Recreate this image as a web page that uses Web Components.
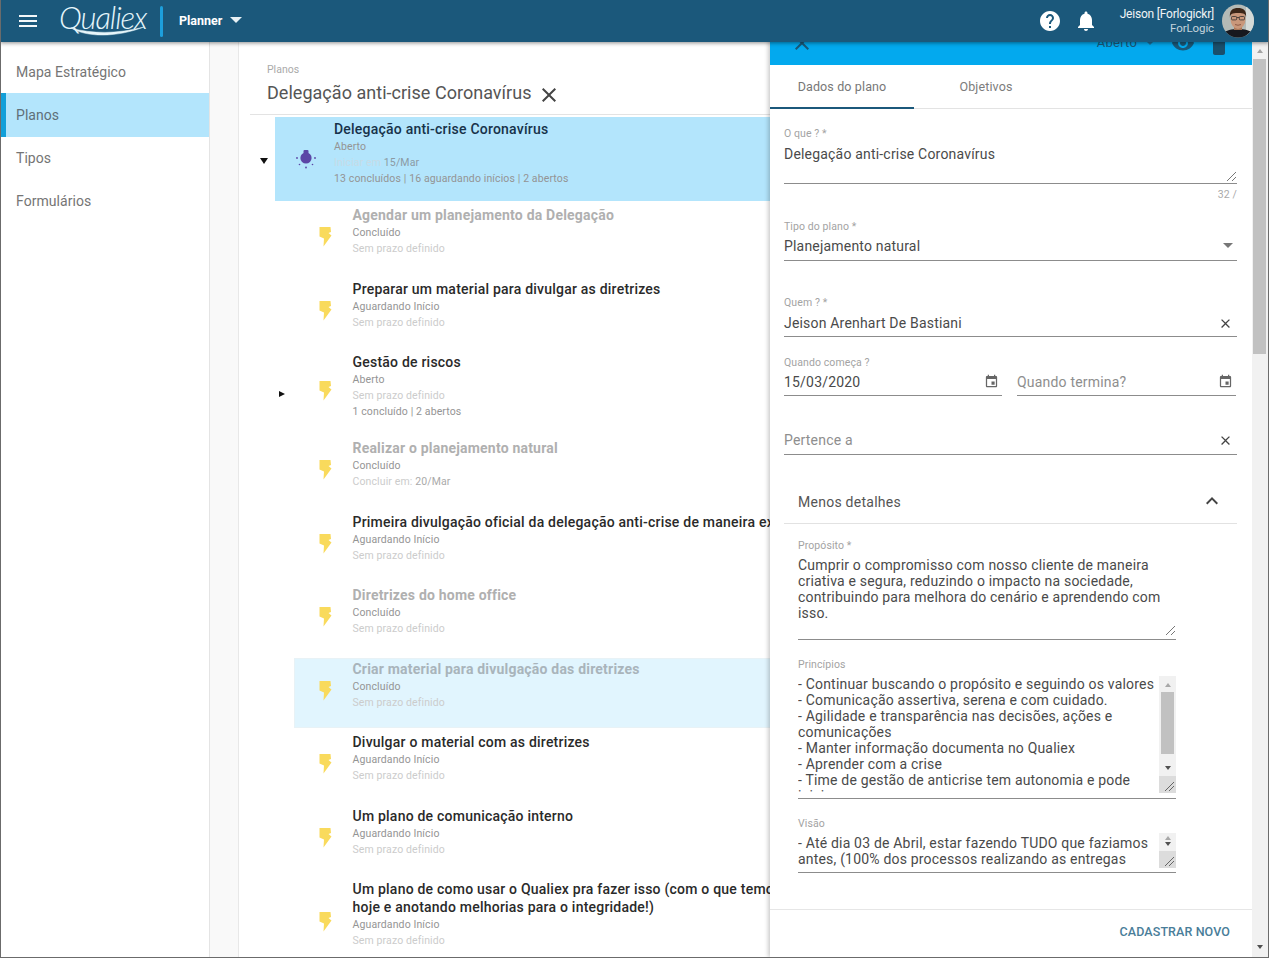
<!DOCTYPE html>
<html lang="pt-BR"><head><meta charset="utf-8"><title>Qualiex Planner</title>
<style>
html,body{margin:0;padding:0;height:100%;overflow:hidden;background:#fff}
body{font-family:Roboto,"Liberation Sans",sans-serif}
</style></head>
<body>
<q-app>
  <q-header slot="header"></q-header>
  <q-sidebar slot="side">
    <q-nav>Mapa Estratégico</q-nav>
    <q-nav active>Planos</q-nav>
    <q-nav>Tipos</q-nav>
    <q-nav>Formulários</q-nav>
  </q-sidebar>
  <plan-page slot="content" crumb="Planos" heading="Delegação anti-crise Coronavírus">
    <plan-row variant="selected" icon="bulb" toggle="open" toggle-width="25" style="--top:3px;--h:84px;--it:27px">
      Delegação anti-crise Coronavírus
      <plan-line slot="meta" tone="mid">Aberto</plan-line>
      <plan-line slot="meta" tone="faint"><span style="color:#c6dbe6">Iniciar em</span> <span style="color:#8b9aa3">15/Mar</span></plan-line>
      <plan-line slot="meta" tone="mid">13 concluídos | 16 aguardando inícios | 2 abertos</plan-line>
    </plan-row>
    <plan-row done style="margin-top:3px">Agendar um planejamento da Delegação
      <plan-line slot="meta" tone="mid">Concluído</plan-line>
      <plan-line slot="meta" tone="faint">Sem prazo definido</plan-line>
    </plan-row>
    <plan-row>Preparar um material para divulgar as diretrizes
      <plan-line slot="meta" tone="mid">Aguardando Início</plan-line>
      <plan-line slot="meta" tone="faint">Sem prazo definido</plan-line>
    </plan-row>
    <plan-row toggle="closed" style="--h:82.5px;--it:28px">Gestão de riscos
      <plan-line slot="meta" tone="mid">Aberto</plan-line>
      <plan-line slot="meta" tone="faint">Sem prazo definido</plan-line>
      <plan-line slot="meta" tone="mid">1 concluído | 2 abertos</plan-line>
    </plan-row>
    <plan-row done>Realizar o planejamento natural
      <plan-line slot="meta" tone="mid">Concluído</plan-line>
      <plan-line slot="meta" tone="faint">Concluir em: <span style="color:#aaa">20/Mar</span></plan-line>
    </plan-row>
    <plan-row>Primeira divulgação oficial da delegação anti-crise de maneira ex
      <plan-line slot="meta" tone="mid">Aguardando Início</plan-line>
      <plan-line slot="meta" tone="faint">Sem prazo definido</plan-line>
    </plan-row>
    <plan-row done>Diretrizes do home office
      <plan-line slot="meta" tone="mid">Concluído</plan-line>
      <plan-line slot="meta" tone="faint">Sem prazo definido</plan-line>
    </plan-row>
    <plan-row done variant="hover">Criar material para divulgação das diretrizes
      <plan-line slot="meta" tone="mid">Concluído</plan-line>
      <plan-line slot="meta" tone="faint">Sem prazo definido</plan-line>
    </plan-row>
    <plan-row>Divulgar o material com as diretrizes
      <plan-line slot="meta" tone="mid">Aguardando Início</plan-line>
      <plan-line slot="meta" tone="faint">Sem prazo definido</plan-line>
    </plan-row>
    <plan-row>Um plano de comunicação interno
      <plan-line slot="meta" tone="mid">Aguardando Início</plan-line>
      <plan-line slot="meta" tone="faint">Sem prazo definido</plan-line>
    </plan-row>
    <plan-row style="--it:32px">Um plano de como usar o Qualiex pra fazer isso (com o que temos<br>hoje e anotando melhorias para o integridade!)
      <plan-line slot="meta" tone="mid">Aguardando Início</plan-line>
      <plan-line slot="meta" tone="faint">Sem prazo definido</plan-line>
    </plan-row>
  </plan-page>
  <plan-panel slot="panel">
    <ui-field label="O que ? *" style="margin-top:17px;--gap:6px;--pb:0px">
      <ui-area style="height:37px">Delegação anti-crise Coronavírus<ui-grip></ui-grip></ui-area>
    </ui-field>
    <ui-counter>32 /</ui-counter>
    <ui-field label="Tipo do plano *" style="margin-top:18px;--gap:5px;--pb:6px">Planejamento natural
      <ui-icon slot="end" name="drop"></ui-icon></ui-field>
    <ui-field label="Quem ? *" style="margin-top:34px;--gap:6px;--pb:5px">Jeison Arenhart De Bastiani
      <ui-icon slot="end" name="close"></ui-icon></ui-field>
    <ui-row style="margin-top:18px">
      <ui-field label="Quando começa ?" style="--gap:5px;--pb:5px;width:218px">15/03/2020
        <ui-icon slot="end" name="cal"></ui-icon></ui-field>
      <ui-field label="&nbsp;" placeholder style="--gap:5px;--pb:5px;width:219px">Quando termina?
        <ui-icon slot="end" name="cal"></ui-icon></ui-field>
    </ui-row>
    <ui-field placeholder style="margin-top:36px;--pb:6px">Pertence a
      <ui-icon slot="end" name="close"></ui-icon></ui-field>
    <ui-section>Menos detalhes</ui-section>
    <ui-indent>
      <ui-field label="Propósito *" style="margin-top:14px;--gap:5px;--pb:0px">
        <ui-area style="height:82px">Cumprir o compromisso com nosso cliente de maneira criativa e segura, reduzindo o impacto na sociedade, contribuindo para melhora do cenário e aprendendo com isso.<ui-grip style="bottom:4px"></ui-grip></ui-area>
      </ui-field>
      <ui-field label="Princípios" style="margin-top:17px;--gap:5px;--pb:5px">
        <ui-area style="height:117px" bar="long">- Continuar buscando o propósito e seguindo os valores<br>- Comunicação assertiva, serena e com cuidado.<br>- Agilidade e transparência nas decisões, ações e comunicações<br>- Manter informação documenta no Qualiex<br>- Aprender com a crise<br>- Time de gestão de anticrise tem autonomia e pode iniciar</ui-area>
      </ui-field>
      <ui-field label="Visão" style="margin-top:17px;--gap:3px;--pb:4px">
        <ui-area style="height:35px;--pad:2px" bar="short">- Até dia 03 de Abril, estar fazendo TUDO que faziamos antes, (100% dos processos realizando as entregas</ui-area>
      </ui-field>
    </ui-indent>
  </plan-panel>
</q-app>
<script>
const P={
 menu:'M3 18h18v-2H3v2zm0-5h18v-2H3v2zm0-7v2h18V6H3z',
 close:'M19 6.41L17.59 5 12 10.59 6.41 5 5 6.41 10.59 12 5 17.59 6.41 19 12 13.41 17.59 19 19 17.59 13.41 12z',
 cal:'M17 12h-5v5h5v-5zM16 1v2H8V1H6v2H5c-1.11 0-1.99.9-1.99 2L3 19c0 1.1.89 2 2 2h14c1.1 0 2-.9 2-2V5c0-1.1-.9-2-2-2h-1V1h-2zm3 18H5V8h14v11z',
 up:'M7.41 15.41L12 10.83l4.59 4.58L18 14l-6-6-6 6z',
 help:'M12 2C6.48 2 2 6.48 2 12s4.48 10 10 10 10-4.48 10-10S17.52 2 12 2zm1 17h-2v-2h2v2zm2.07-7.75l-.9.92C13.45 12.9 13 13.5 13 15h-2v-.5c0-1.1.45-2.1 1.17-2.83l1.24-1.26c.37-.36.59-.86.59-1.41 0-1.1-.9-2-2-2s-2 .9-2 2H8c0-2.21 1.79-4 4-4s4 1.79 4 4c0 .88-.36 1.68-.93 2.25z',
 bell:'M12 22c1.1 0 2-.9 2-2h-4c0 1.1.89 2 2 2zm6-6v-5c0-3.07-1.64-5.64-4.5-6.32V4c0-.83-.67-1.5-1.5-1.5s-1.5.67-1.5 1.5v.68C7.63 5.36 6 7.92 6 11v5l-2 2v1h16v-1l-2-2z',
 eye:'M12 4.5C7 4.5 2.73 7.61 1 12c1.73 4.39 6 7.5 11 7.5s9.27-3.11 11-7.5c-1.73-4.39-6-7.5-11-7.5zM12 17c-2.76 0-5-2.24-5-5s2.24-5 5-5 5 2.24 5 5-2.24 5-5 5zm0-8c-1.66 0-3 1.34-3 3s1.34 3 3 3 3-1.34 3-3-1.34-3-3-3z',
 del:'M6 19c0 1.1.9 2 2 2h8c1.1 0 2-.9 2-2V7H6v12zM19 4h-3.5l-1-1h-5l-1 1H5v2h14V4z'
};
const svg=(d,s,c,extra='')=>`<svg width="${s}" height="${s}" viewBox="0 0 24 24" fill="${c}" style="display:block;flex:none;${extra}"><path d="${d}"/></svg>`;
const def=(name,html,setup)=>customElements.define(name,class extends HTMLElement{
  constructor(){super();this.attachShadow({mode:'open'}).innerHTML=html;}
  connectedCallback(){if(setup)setup(this,this.shadowRoot);}
});

def('q-app',`<style>
:host{display:flex;flex-direction:column;width:1269px;height:958px;box-sizing:border-box;border:1px solid #6b6b6b;border-top:0;overflow:hidden;position:relative}
.main{flex:1;display:flex;position:relative;min-height:0}
.content{flex:1;min-width:0;overflow:hidden}
.gutter{width:28px;flex:none;background:#f9f9f9;border-right:1px solid #e8e8e8}
.panel{position:absolute;top:-22px;right:0;bottom:0;z-index:3}
.head{display:block;position:relative;z-index:5}
</style>
<div class="head"><slot name="header"></slot></div>
<div class="main"><slot name="side"></slot><div class="gutter"></div><div class="content"><slot name="content"></slot></div><div class="panel"><slot name="panel"></slot></div></div>`);

def('q-header',`<style>
:host{display:flex;align-items:center;height:42px;margin-left:-1px;width:1269px;background:#1b587b;box-shadow:0 1px 4px rgba(0,0,0,.45);color:#fff;box-sizing:border-box;font-family:Roboto,sans-serif}
.menu{margin-left:16px}
.logo{position:relative;margin-left:18px;width:92px;height:42px;flex:none}
.logo span{position:absolute;left:1px;top:-3px;font:italic 300 31px/40px Lato,"Open Sans",sans-serif;letter-spacing:-1.1px;color:#e6f6fb;white-space:nowrap}
.logo svg{position:absolute;left:0;top:0}
.div{width:3px;height:31px;border-radius:2px;background:#1d9fdc;margin-left:10px;flex:none}
.app{font-size:12.5px;font-weight:700;margin:-2px 0 0 16px;letter-spacing:0}
.caret{margin:-2px 0 0 8px;width:0;height:0;border:6px solid transparent;border-top:6px solid #e8f1f5;border-bottom:0}
.sp{flex:1}
.bell{margin-left:12px}
.user{margin-left:22px;text-align:right;font-size:12px;line-height:14px;letter-spacing:-.2px;color:#f0f4f6;margin-top:-1px}
.user small{display:block;font-size:11.5px;letter-spacing:-.1px;color:#c3d3dc}
.ava{margin:0 15px 0 8px;flex:none;display:block}
</style>
<span class="menu">${svg(P.menu,24,'#f3f7f9')}</span>
<div class="logo"><span>Qualiex</span><svg width="92" height="42" viewBox="0 0 92 42" fill="none"><path d="M13 28C30 38 60 37 86 27C60 34 34 34 13 28Z" fill="#e6f6fb" stroke="#e6f6fb" stroke-width=".5"/></svg></div>
<div class="div"></div>
<div class="app">Planner</div><div class="caret"></div>
<div class="sp"></div>
<span>${svg(P.help,24,'#fff')}</span>
<span class="bell">${svg(P.bell,24,'#fff')}</span>
<div class="user">Jeison [Forlogickr]<small>ForLogic</small></div>
<svg class="ava" width="32" height="34" viewBox="0 0 32 34"><defs><clipPath id="c"><ellipse cx="16" cy="17" rx="16" ry="16.5"/></clipPath></defs><g clip-path="url(#c)"><rect width="32" height="34" fill="#b4bab6"/><rect x="24" width="8" height="34" fill="#d5dad7"/><path d="M0 34V30C4 26 10 25 16 25C22 25 28 26 32 30V34Z" fill="#17181f"/><rect x="12" y="19" width="8" height="7" fill="#a87658"/><ellipse cx="16" cy="15" rx="7.500" ry="10" fill="#c9977a"/><path d="M8 14C7 6 11 4 16 4S25 6 24 14C24 10 22 9 16 9S8 10 8 14Z" fill="#3b2618"/><g fill="none" stroke="#33302e" stroke-width=".8"><rect x="9.500" y="12.500" width="5.200" height="3.400" rx="1"/><rect x="17.300" y="12.500" width="5.200" height="3.400" rx="1"/><path d="M14.700 13.500h2.600"/></g><path d="M13 20.500q3 1.500 6 0" stroke="#7d4a3a" fill="none" stroke-width=".8"/></g></svg>`);

def('q-sidebar',`<style>:host{display:block;width:208px;flex:none;box-sizing:content-box;border-right:1px solid #e4e4e4;padding-top:8px;background:#fff}</style><slot></slot>`);

def('q-nav',`<style>
:host{display:flex;align-items:center;height:43px;padding-left:15px;font-size:14px;letter-spacing:.05px;color:#757575;box-sizing:border-box}
:host([active]){background:#b3e5fc;color:#5f6f78;box-shadow:inset 5px 0 0 #119fd9;height:44px;margin-bottom:-1px;padding-bottom:1px}
</style><slot></slot>`);

def('plan-page',`<style>
:host{display:block;width:532px;font-family:Roboto,sans-serif}
.top{padding:21px 0 9px 17px;border-bottom:1px solid #e3e3e3;margin-left:11px}
.crumb{font-size:10.5px;line-height:12px;color:#aaa;padding-top:1px;margin-bottom:-1px}
.h{display:flex;align-items:center;margin-top:6px;font-size:18px;line-height:24px;letter-spacing:.03px;color:#555}
.h svg{margin-left:5px;transform:translateY(2px)}
.tree{margin:2px 0 0 11px}
</style>
<div class="top"><div class="crumb"></div><div class="h"><span class="t"></span>${svg(P.close,24,'#444')}</div></div>
<div class="tree"><slot></slot></div>`,(el,s)=>{
  s.querySelector('.crumb').textContent=el.getAttribute('crumb');
  s.querySelector('.t').textContent=el.getAttribute('heading');
});

const BOLT=`<svg width="13" height="20" viewBox="0 0 13 20" style="display:block"><path d="M.5 0H11.500L12 5 9.500 6 12.500 8.500 4.500 19.500 5 11.500 .5 9.500Z" fill="#f9da5c"/></svg>`;
const BULB=`<svg width="24" height="22" viewBox="0 0 24 22" fill="#5b46a6" style="display:block"><rect x="9.500" y="3" width="5" height="5" rx="1"/><circle cx="12" cy="11" r="5.600"/><circle cx="3" cy="11" r=".9"/><circle cx="21" cy="11" r=".9"/><circle cx="12" cy="20.500" r=".9"/><circle cx="5.500" cy="17.500" r=".8"/><circle cx="18.500" cy="17.500" r=".8"/></svg>`;
def('plan-row',`<style>
:host{display:flex;font-family:Roboto,sans-serif}
.tg{flex:none;width:44px;display:flex;align-items:center;justify-content:flex-end}
.tg i{display:block;width:0;height:0;margin-right:8px}
.card{flex:1;min-width:0;display:flex;min-height:var(--h,70px);padding:var(--top,2px) 0 0;margin-bottom:3.500px;box-sizing:border-box;overflow:hidden}
.ic{flex:none;width:58.500px;padding:var(--it,21px) 0 0 25px;box-sizing:border-box}
.tx{min-width:0;white-space:nowrap}
.ti{font-size:14px;line-height:18px;font-weight:500;letter-spacing:.22px;color:#2a2a2a}
.mt{margin-top:1px}
:host([done]) .ti{color:#b0b0b0;font-weight:700;letter-spacing:.2px}
:host([variant=selected]) .card{background:#b3e5fc;margin:0}
:host([variant=selected]) .ic{padding-left:19px;width:59px}
:host([variant=selected]) .ti{color:#17324a}
:host([variant=hover]) .card{background:#e1f5fe;box-shadow:0 0 0 1px #e8f2f6 inset}
:host([variant=hover]) .ti{color:#a9b4bb}
</style>
<div class="tg"><i></i></div>
<div class="card"><div class="ic"></div><div class="tx"><div class="ti"><slot></slot></div><div class="mt"><slot name="meta"></slot></div></div></div>`,(el,s)=>{
  s.querySelector('.ic').innerHTML=el.getAttribute('icon')==='bulb'?BULB:BOLT;
  const w=el.getAttribute('toggle-width'); if(w){s.querySelector('.tg').style.width=w+'px';}
  const i=s.querySelector('i'),t=el.getAttribute('toggle');
  if(t==='open'){i.style.cssText='border:4px solid transparent;border-top:6px solid #111;border-bottom:0;margin-right:7px;margin-top:4px';}
  if(t==='closed'){i.style.cssText='border:3.500px solid transparent;border-left:6px solid #111;border-right:0;margin-right:9px';}
});

def('plan-line',`<style>
:host{display:block;font-size:10.500px;line-height:16px;letter-spacing:.12px;color:#999}
:host([tone=faint]){color:#ccc}
:host([tone=mid]){color:#949494}
</style><slot></slot>`);

def('plan-panel',`<style>
:host{display:flex;height:100%;font-family:Roboto,sans-serif}
.m{width:482px;display:flex;flex-direction:column;background:#fff;box-shadow:-2px 0 4px rgba(0,0,0,.2);min-height:0}
.band{flex:none;height:45px;background:#03a9ee;display:flex;align-items:center;color:#1a5878;font-size:13px;padding-left:20px}
.band .st{margin-left:auto;letter-spacing:.2px}
.band .cr{width:0;height:0;border:4px solid transparent;border-top:4px solid #1a6f9a;border-bottom:0;margin:0 0 0 9px}
.tabs{flex:none;display:flex;height:44px;border-bottom:1px solid #e3e3e3;box-sizing:border-box}
.tab{width:144px;box-sizing:border-box;display:flex;align-items:center;justify-content:center;font-size:12.500px;letter-spacing:.13px;color:#7c7c7c}
.tab.on{border-bottom:2px solid #1b587b;margin-bottom:-1px;color:#777}
.body{flex:1;min-height:0;overflow:hidden;padding:0 15px 0 14px}
.foot{flex:none;height:48px;border-top:1px solid #e6e6e6;display:flex;align-items:center;justify-content:flex-end;padding:0 22px 4px 0;box-sizing:border-box;font-size:12.500px;font-weight:500;letter-spacing:.1px;color:#497d99}
</style>
<div class="m">
 <div class="band">${svg(P.close,24,'#1a5878')}<span class="st">Aberto</span><span class="cr"></span>
   <span style="margin:0 0 0 17px">${svg(P.eye,24,'#1a5878')}</span><span style="margin:6px 21px 0 12px">${svg(P.del,24,'#1a4f6c')}</span></div>
 <div class="tabs"><div class="tab on">Dados do plano</div><div class="tab">Objetivos</div></div>
 <div class="body"><slot></slot></div>
 <div class="foot">CADASTRAR NOVO</div>
</div>
<ui-scrollbar></ui-scrollbar>`);

def('ui-scrollbar',`<style>
:host{display:flex;flex-direction:column;width:16px;flex:none;background:#f1f1f1;padding:22px 0 2px;box-sizing:border-box}
.a{height:17px;display:flex;align-items:center;justify-content:center}
.a i{display:block;width:0;height:0;border:3.500px solid transparent}
.u i{border-bottom:4px solid #a3a3a3;border-top:0}
.d i{border-top:4px solid #505050;border-bottom:0}
.t{height:295px;margin:0 2px 0 1px;background:#c1c1c1}
.s{flex:1}
</style><div class="a u"><i></i></div><div class="t"></div><div class="s"></div><div class="a d"><i></i></div>`);

def('ui-field',`<style>
:host{display:block;font-family:Roboto,sans-serif}
.l{font-size:10.500px;line-height:16px;color:#a3a3a3;letter-spacing:.1px;margin-bottom:calc(var(--gap,0px) - 2px)}
.l:empty{display:none}
.v{display:flex;align-items:flex-start;border-bottom:1px solid #8c8c8c;padding-bottom:var(--pb,5px);font-size:14px;line-height:16px;letter-spacing:.19px;color:#4a4a4a}
.x{flex:1;min-width:0}
:host([placeholder]) .v{color:#8e8e8e}
</style><div class="l"></div><div class="v"><div class="x"><slot></slot></div><slot name="end"></slot></div>`,(el,s)=>{
  const l=el.getAttribute('label'); if(l)s.querySelector('.l').textContent=l;
});

def('ui-counter',`<style>:host{display:block;text-align:right;font-size:10.500px;line-height:12px;margin-top:5px;color:#aaa;letter-spacing:.1px}</style><slot></slot>`);
def('ui-row',`<style>:host{display:flex;justify-content:space-between;width:452px}</style><slot></slot>`);
def('ui-indent',`<style>:host{display:block;padding:0 61px 0 14px}</style><slot></slot>`);

def('ui-icon',`<style>:host{display:block;flex:none;height:16px;width:16px;margin-right:3px}
svg{display:block;margin:0}</style><span class="i"></span>`,(el,s)=>{
  const n=el.getAttribute('name');
  if(n==='drop'){s.querySelector('.i').innerHTML='<svg width="16" height="16" viewBox="0 0 16 16" style="margin-top:-1px"><path d="M3 6h10l-5 5z" fill="#777"/></svg>';el.style.marginRight='1px';}
  else if(n==='cal'){s.querySelector('.i').innerHTML=svg(P.cal,15,'#666');el.style.marginRight='2px';}
  else s.querySelector('.i').innerHTML=svg(P.close,15,'#444','margin-top:1px');
});

def('ui-section',`<style>
:host{display:flex;align-items:center;justify-content:space-between;height:43px;margin-top:26px;box-sizing:border-box;border-bottom:1px solid #e2e2e2;padding:0 13px 0 14px;font-size:14px;letter-spacing:.26px;color:#555}
svg{margin-top:-2px}
</style><slot></slot>${svg(P.up,24,'#444')}`);

def('ui-area',`<style>
:host{display:block;position:relative;overflow:hidden;padding-top:var(--pad,0);box-sizing:border-box}
.sb{position:absolute;top:0;right:0;bottom:0;width:17px;background:#f1f1f1;display:none;flex-direction:column}
.sb i{display:block;width:0;height:0;margin:0 auto;border:3.500px solid transparent}
.up{border-bottom:4px solid #a8a8a8 !important;border-top:0 !important}
.dn{border-top:4px solid #505050 !important;border-bottom:0 !important}
.th{height:62px;background:#c1c1c1;margin:5px 2px 5px 2px}
.cn{position:absolute;right:0;bottom:0;width:17px;height:17px;background:#dcdcdc}
.tx{padding-right:var(--pr,0)}
</style><div class="tx"><slot></slot></div><div class="sb"></div>`,(el,s)=>{
  const b=el.getAttribute('bar'),sb=s.querySelector('.sb');
  if(!b)return;
  el.style.setProperty('--pr','17px');
  sb.style.display='flex';
  const grip='<div class="cn"><svg width="17" height="17" viewBox="0 0 17 17"><path d="M6 15L15 6M10 15L15 10" stroke="#666" fill="none" stroke-width="1"/></svg></div>';
  sb.innerHTML=b==='long'
    ?'<i class="up" style="margin-top:7px"></i><div class="th"></div><i class="dn" style="margin-top:7px"></i>'+grip
    :'<i class="up" style="margin-top:3px"></i><i class="dn" style="margin-top:2px"></i>'+grip;
});
def('ui-grip',`<style>:host{position:absolute;right:0;bottom:2px;width:12px;height:12px;display:block}</style><svg width="12" height="12" viewBox="0 0 12 12"><path d="M2 11L11 2M7 11L11 7" stroke="#777" fill="none"/></svg>`);
</script>
</body></html>
